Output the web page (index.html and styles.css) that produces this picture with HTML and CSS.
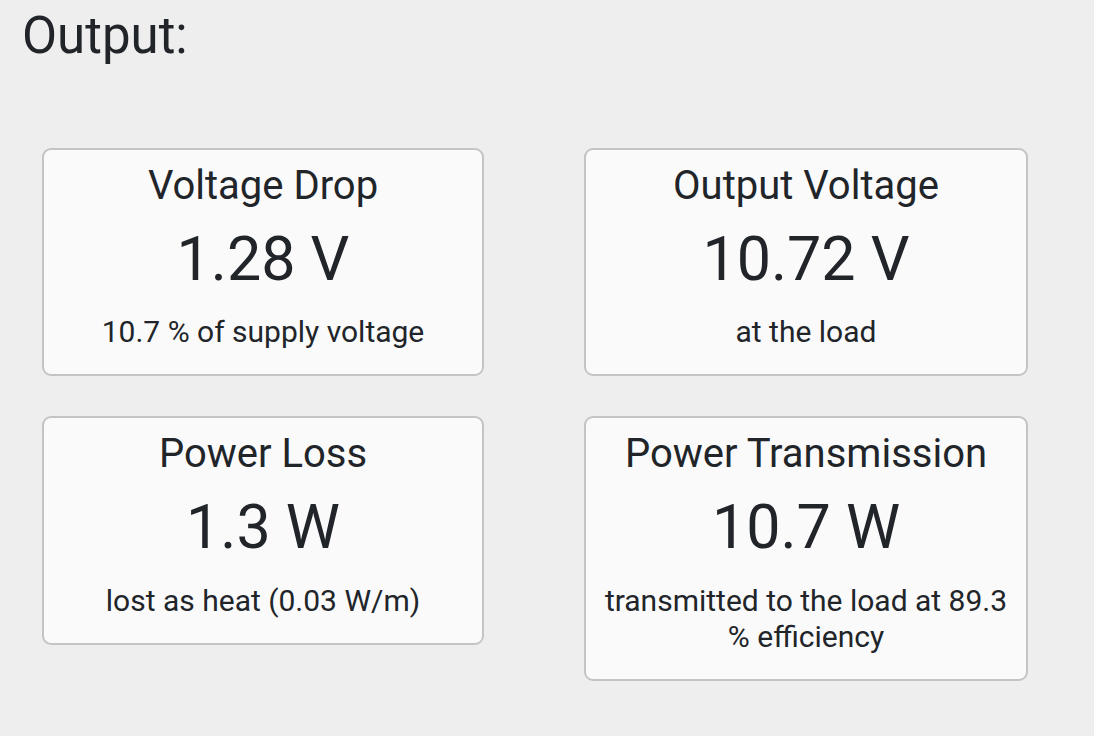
FILE: index.html
```html
<!DOCTYPE html>
<html lang="en">
<head>
    <meta charset="UTF-8">
    <meta name="viewport" content="width=device-width, initial-scale=1.0">
    <title>Output</title>
    <link rel="stylesheet" href="styles.css">
</head>
<body>
    <div id="output">
        <h2 class="output-title">Output:</h2>
        <div class="card-grid">
            <div class="result-card">
                <div class="card-label">Voltage Drop</div>
                <div class="card-value">1.28 V</div>
                <div class="card-note">10.7 % of supply voltage</div>
            </div>
            <div class="result-card">
                <div class="card-label">Output Voltage</div>
                <div class="card-value">10.72 V</div>
                <div class="card-note">at the load</div>
            </div>
            <div class="result-card">
                <div class="card-label">Power Loss</div>
                <div class="card-value">1.3 W</div>
                <div class="card-note">lost as heat (0.03 W/m)</div>
            </div>
            <div class="result-card">
                <div class="card-label">Power Transmission</div>
                <div class="card-value">10.7 W</div>
                <div class="card-note">transmitted to the load at 89.3 % efficiency</div>
            </div>
        </div>
    </div>
</body>
</html>
```

FILE: styles.css
```css
body {
    margin: 0;
    background-color: #eeeeee;
    color: #212529;
    font-family: Roboto, "Liberation Sans", sans-serif;
}
#output {
    padding: 5px 0 0 22px;
}
.output-title {
    margin: 0;
    font-size: 51px;
    font-weight: 400;
    line-height: 1.2;
}
.card-grid {
    display: grid;
    grid-template-columns: 442px 444px;
    column-gap: 100px;
    row-gap: 40px;
    align-items: start;
    margin: 82px 0 0 20px;
}
.result-card {
    background: #fafafa;
    border: 2px solid #c4c4c4;
    border-radius: 9px;
    padding: 12px 16px 24px;
    text-align: center;
}
.card-label {
    font-size: 40px;
    line-height: 1.2;
}
.card-value {
    margin-top: 13px;
    font-size: 61px;
    line-height: 1.2;
}
.card-note {
    margin-top: 18px;
    font-size: 30px;
    line-height: 1.2;
}
```
